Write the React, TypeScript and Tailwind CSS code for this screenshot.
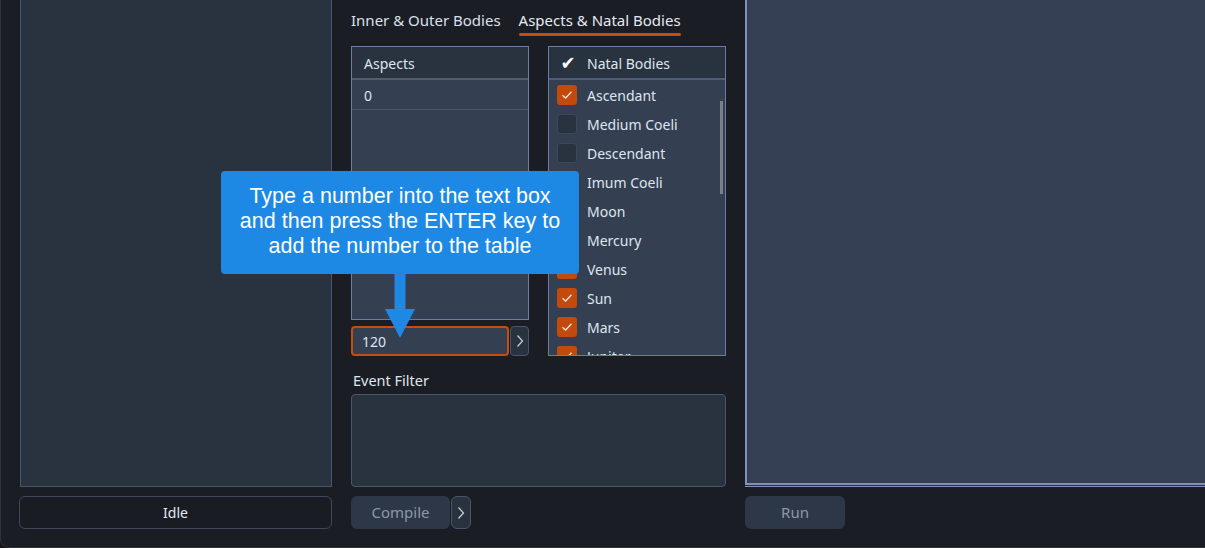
import React from 'react';

const bodies: { name: string; on: boolean }[] = [
  { name: 'Ascendant', on: true },
  { name: 'Medium Coeli', on: false },
  { name: 'Descendant', on: false },
  { name: 'Imum Coeli', on: true },
  { name: 'Moon', on: true },
  { name: 'Mercury', on: true },
  { name: 'Venus', on: true },
  { name: 'Sun', on: true },
  { name: 'Mars', on: true },
  { name: 'Jupiter', on: true },
];

function Chevron() {
  return (
    <svg width="8" height="14" viewBox="0 0 8 14" fill="none">
      <polyline points="1.5,1.5 6.5,7 1.5,12.5" stroke="#c9d1de" strokeWidth="1.2" />
    </svg>
  );
}

function CheckBox({ on }: { on: boolean }) {
  if (!on) {
    return <div className="w-[20px] h-[20px] shrink-0 rounded-[3px] border border-[#3e4759] bg-[#29323f]" />;
  }
  return (
    <div className="w-[20px] h-[20px] shrink-0 rounded-[3px] bg-[#c24a0c] flex items-center justify-center">
      <svg width="12" height="10" viewBox="0 0 12 10" fill="none">
        <polyline points="1.5,5.2 4.6,8 10.5,1.8" stroke="#f2e6de" strokeWidth="1.3" />
      </svg>
    </div>
  );
}

export default function App() {
  return (
    <div className="w-[1205px] h-[548px] bg-[#14161b] overflow-hidden" style={{ fontFamily: '"Noto Sans", "Open Sans", sans-serif' }}>
      <div className="relative h-[548px] flex rounded-bl-[9px] border-l border-b border-[#30333b] bg-[#1b1d24] pl-[18px] text-[14px] text-[#dfe5ee]">
        {/* left: status column */}
        <div className="w-[313px] flex flex-col">
          <div className="ml-px h-[487px] border border-t-0 border-[#4a5470] bg-[#29323f]" />
          <button className="mt-[9px] h-[33px] rounded-md border border-[#3f485b] bg-[#1a1c23] text-[#e4e8ef]">Idle</button>
        </div>

        {/* middle: settings */}
        <div className="ml-[19px] w-[375px] flex flex-col">
          <div className="flex gap-[18px] pt-[10px]">
            <div className="flex flex-col">
              <span className="leading-[21px] text-[15px] text-[#d9e0ea]">Inner &amp; Outer Bodies</span>
              <div className="mt-[2px] h-[3px]" />
            </div>
            <div className="flex flex-col">
              <span className="leading-[21px] text-[15px] text-[#e4e9f1]">Aspects &amp; Natal Bodies</span>
              <div className="mt-[2px] h-[3px] rounded-full bg-[#c2500f]" />
            </div>
          </div>

          <div className="mt-[10px] flex gap-[19px]">
            {/* aspects table + entry */}
            <div className="w-[178px] flex flex-col">
              <div className="h-[274px] border border-[#6e7ba3] bg-[#343f52] flex flex-col">
                <div className="h-[33px] pt-px bg-[#29323f] border-b-2 border-[#555d6d] flex items-center px-3">Aspects</div>
                <div className="h-[30px] pt-px border-b border-[#4a5570] flex items-center px-3">0</div>
              </div>
              <div className="mt-[6px] flex gap-px">
                <div className="w-[158px] h-[30px] rounded-[4px] border-2 border-[#c24f0d] bg-[#343f52] flex items-center px-[9px]">120</div>
                <button className="w-[19px] h-[30px] rounded-[4px] border border-[#4a5470] bg-[#29323f] flex items-center justify-center">
                  <Chevron />
                </button>
              </div>
            </div>

            {/* natal bodies list */}
            <div className="relative w-[178px] h-[310px] border border-[#6e7ba3] bg-[#343f52] overflow-hidden">
              <div className="h-[33px] pt-px bg-[#29323f] border-b-2 border-[#4f5b78] flex items-center">
                <span className="w-[38px] text-center text-[18px] leading-none text-white" style={{ fontFamily: '"DejaVu Sans", sans-serif' }}>✔</span>
                <span>Natal Bodies</span>
              </div>
              {bodies.map((b) => (
                <div key={b.name} className="h-[29px] pt-px flex items-center gap-[10px] pl-[8px]">
                  <CheckBox on={b.on} />
                  <span>{b.name}</span>
                </div>
              ))}
              <div className="absolute left-[171px] top-[54px] w-[3px] h-[93px] bg-[#7a808c]" />
            </div>
          </div>

          <div className="mt-[14px] leading-[20px] pl-[2px] text-[14.5px]">Event Filter</div>
          <div className="mt-[4px] h-[93px] rounded-[4px] border border-[#4b5672] bg-[#29323f]" />

          <div className="mt-[9px] flex gap-px">
            <button className="w-[99px] h-[33px] rounded-md bg-[#2d3748] text-[#8c97a8] text-[15px]">Compile</button>
            <button className="w-[20px] h-[33px] rounded-md border border-[#4a5470] bg-[#29323f] flex items-center justify-center">
              <Chevron />
            </button>
          </div>
        </div>

        {/* right: output */}
        <div className="ml-[19px] flex-1 flex flex-col">
          <div className="h-[483px] border-l-2 border-[#8091bd] bg-[#354055]" />
          <div className="h-[2px] bg-[#8091bd]" />
          <div className="h-px bg-[#2a3140]" />
          <div className="h-px bg-[#8091bd]" />
          <button className="mt-[9px] w-[100px] h-[33px] rounded-md bg-[#2d3748] text-[#8c97a8] text-[15px]">Run</button>
        </div>

        {/* hint callout */}
        <div className="absolute left-[220px] top-[171px] flex flex-col items-center">
          <div
            className="w-[358px] h-[103px] rounded-[4px] bg-[#1e88e5] text-white text-[21.5px] leading-[25px] text-center pt-[13px]"
            style={{ fontFamily: '"Liberation Sans", Arial, sans-serif' }}
          >
            Type a number into the text box
            <br />
            and then press the ENTER key to
            <br />
            add the number to the table
          </div>
          <svg width="30" height="64" viewBox="0 0 30 64" className="ml-[-1px]">
            <rect x="9.5" y="0" width="11" height="36" fill="#1e88e5" />
            <polygon points="0,35 30,35 15,64" fill="#1e88e5" />
          </svg>
        </div>
      </div>
    </div>
  );
}
